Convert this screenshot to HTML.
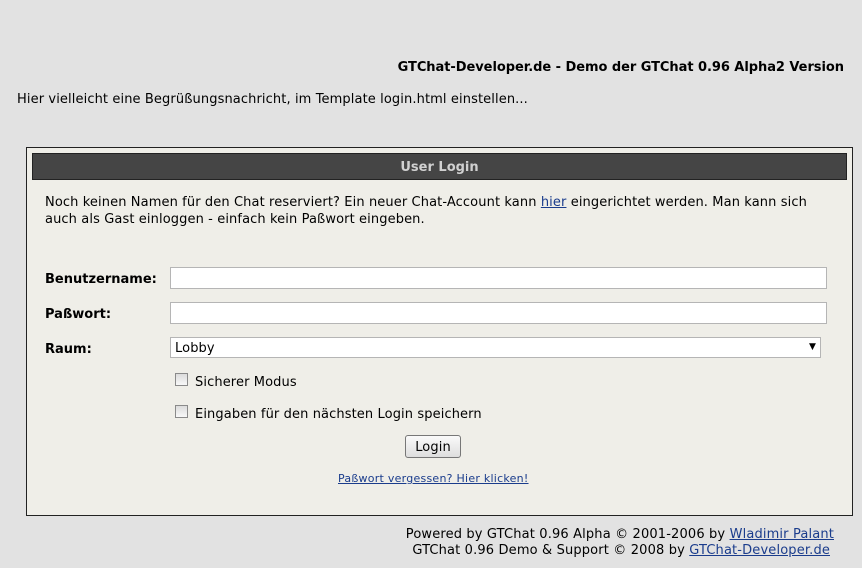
<!DOCTYPE html>
<html><head><meta charset="utf-8"><style>
body{margin:0;width:862px;height:568px;background:#e2e2e2;font-family:"DejaVu Sans","Liberation Sans",sans-serif;font-size:13px;color:#000;position:relative;overflow:hidden;letter-spacing:0.11px}
.a{position:absolute;white-space:nowrap}
a{color:#1a3c8c;text-decoration:underline}
.box{position:absolute;left:26px;top:147px;width:825px;height:367px;border:1px solid #222;background:#efeee8}
.bar{position:absolute;left:32px;top:153px;width:813px;height:25px;border:1px solid #222;background:#454545;color:#d0d0d0;font-weight:bold;text-align:center;line-height:27px;letter-spacing:0}
.in{position:absolute;left:170px;width:655px;height:20px;background:#fff;border:1px solid #b5b5b5}
.cb{position:absolute;left:175px;width:11px;height:11px;border:1px solid #8a8a8a;background:linear-gradient(#dcdcdc,#f8f8f8)}
.btn{position:absolute;left:405px;top:435px;width:54px;height:21px;border:1px solid #777;border-radius:3px;background:linear-gradient(#fafafa,#dedede);text-align:center;line-height:23px}
.bd{font-weight:bold;letter-spacing:0}
</style></head><body>
<div class="a bd" style="right:18px;top:60px;letter-spacing:-0.05px">GTChat-Developer.de - Demo der GTChat 0.96 Alpha2 Version</div>
<div class="a" style="left:17px;top:92px">Hier vielleicht eine Begrüßungsnachricht, im Template login.html einstellen...</div>
<div class="box"></div>
<div class="bar">User Login</div>
<div class="a" style="left:45px;top:194px;line-height:17px">Noch keinen Namen für den Chat reserviert? Ein neuer Chat-Account kann <a>hier</a> eingerichtet werden. Man kann sich<br>auch als Gast einloggen - einfach kein Paßwort eingeben.</div>
<div class="a bd" style="left:45px;top:272px">Benutzername:</div>
<div class="in" style="top:267px"></div>
<div class="a bd" style="left:45px;top:307px">Paßwort:</div>
<div class="in" style="top:302px"></div>
<div class="a bd" style="left:45px;top:342px">Raum:</div>
<div class="in" style="top:337px;width:649px;height:19px"><span class="a" style="left:4px;top:3px">Lobby</span><span class="a" style="right:4px;top:4px;font-size:9px">▼</span></div>
<div class="cb" style="top:373px"></div>
<div class="a" style="left:195px;top:375px">Sicherer Modus</div>
<div class="cb" style="top:405px"></div>
<div class="a" style="left:195px;top:407px">Eingaben für den nächsten Login speichern</div>
<div class="btn">Login</div>
<div class="a" style="left:338px;top:472px;font-size:11px;letter-spacing:0.25px"><a>Paßwort vergessen? Hier klicken!</a></div>
<div class="a" style="right:28px;top:527px;line-height:16px;letter-spacing:0.15px">Powered by GTChat 0.96 Alpha © 2001-2006 by <a>Wladimir Palant</a></div>
<div class="a" style="right:32px;top:543px;line-height:16px;letter-spacing:0.15px">GTChat 0.96 Demo &amp; Support © 2008 by <a>GTChat-Developer.de</a></div>
</body></html>
